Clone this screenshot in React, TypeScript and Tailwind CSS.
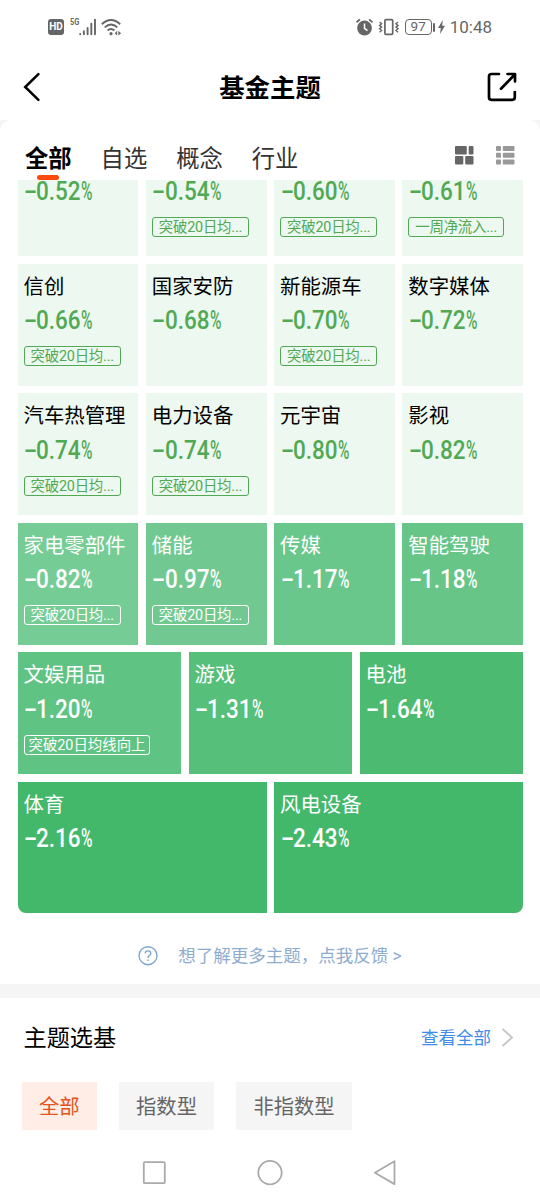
import { useState } from "react";

interface Theme {
  name: string;
  value: string;
  tag?: string;
  color?: string;
}

const TABS = ["全部", "自选", "概念", "行业"];
const TYPES = ["全部", "指数型", "非指数型"];
const TAG = "突破20日均...";

const ROWS: Theme[][] = [
  [
    { name: "", value: "0.52" },
    { name: "", value: "0.54", tag: TAG },
    { name: "", value: "0.60", tag: TAG },
    { name: "", value: "0.61", tag: "一周净流入..." },
  ],
  [
    { name: "信创", value: "0.66", tag: TAG },
    { name: "国家安防", value: "0.68" },
    { name: "新能源车", value: "0.70", tag: TAG },
    { name: "数字媒体", value: "0.72" },
  ],
  [
    { name: "汽车热管理", value: "0.74", tag: TAG },
    { name: "电力设备", value: "0.74", tag: TAG },
    { name: "元宇宙", value: "0.80" },
    { name: "影视", value: "0.82" },
  ],
  [
    { name: "家电零部件", value: "0.82", tag: TAG, color: "bg-[#76cc95]" },
    { name: "储能", value: "0.97", tag: TAG, color: "bg-[#71c991]" },
    { name: "传媒", value: "1.17", color: "bg-[#6ac78c]" },
    { name: "智能驾驶", value: "1.18", color: "bg-[#66c587]" },
  ],
  [
    { name: "文娱用品", value: "1.20", tag: "突破20日均线向上", color: "bg-[#5fc383]" },
    { name: "游戏", value: "1.31", color: "bg-[#56bf7a]" },
    { name: "电池", value: "1.64", color: "bg-[#4cbb71]" },
  ],
  [
    { name: "体育", value: "2.16", color: "bg-[#43b86b] rounded-bl-lg" },
    { name: "风电设备", value: "2.43", color: "bg-[#43b86b] rounded-br-lg" },
  ],
];

const StatusBar = () => (
  <div className="flex h-[54px] items-center bg-white pl-12 pr-12 text-[#666]">
    <div className="flex h-4 w-4 items-center justify-center rounded-[3px] bg-[#666] text-[10px] font-bold leading-none text-white">
      HD
    </div>
    <span className="-mt-2.5 ml-1.5 w-[9px] origin-left scale-x-[.78] text-[9.5px] font-bold leading-none">5G</span>
    <svg className="h-[18px] w-[18px]" viewBox="0 0 18 18" fill="none" stroke="currentColor" strokeWidth="1.9" strokeLinecap="round">
      <path d="M1.2 16v.2M4.9 13.3v3M8.6 10v6.3M12.3 5.7v10.6M16 1.6v14.7" />
    </svg>
    <svg className="ml-1 h-[19px] w-[21px]" viewBox="0 0 21 19" fill="none" stroke="currentColor" strokeWidth="1.9">
      <path d="M.8 6.2Q10 -2.2 19.2 6.2M3.7 9.4Q10 3.7 16.3 9.4M6.6 12.5Q10 9.3 13.4 12.5" />
      <circle cx="10" cy="15.7" r="1.6" fill="currentColor" stroke="none" />
      <path d="m16.2 12.8-2.4 2.5 2.4 2.3zM17.4 12.8l2.7 2.5-2.7 2.3z" fill="currentColor" stroke="none" />
    </svg>
    <div className="flex-1" />
    <svg className="h-[18px] w-[18px]" viewBox="0 0 18 18" fill="none" stroke="currentColor">
      <circle cx="8.5" cy="10" r="7.4" fill="currentColor" stroke="none" />
      <path d="M.5 4.3 3.9 1.3M16.5 4.3l-3.4-3" strokeWidth="1.8" />
      <path d="M8.5 5.5v4.8l3 2.4" stroke="white" strokeWidth="1.5" />
    </svg>
    <svg className="ml-1 h-[18px] w-[22px]" viewBox="0 0 22 18" fill="none" stroke="currentColor">
      <rect x="6.9" y="1.6" width="7.8" height="14.8" rx="1.2" strokeWidth="1.7" />
      <path d="m1.6 4 2 1.7-2 1.7 2 1.7-2 1.7 2 1.7-2 1.7M20 4l-2 1.7 2 1.7-2 1.7 2 1.7-2 1.7 2 1.7" strokeWidth="1.4" />
    </svg>
    <div className="ml-[5px] flex h-4 w-[27px] items-center justify-center rounded-[4px] border-[1.5px] border-[#666] text-[13.5px] leading-none">
      97
    </div>
    <div className="ml-px h-[9px] w-[2px] rounded bg-[#666]" />
    <svg className="ml-[3px] h-3.5 w-[7px]" viewBox="0 0 7 14" fill="currentColor">
      <path d="M4.8 0 0 8h2.8L2 14l5-8.3H4.2z" />
    </svg>
    <span className="ml-[5px] pt-px text-[17px] leading-none">10:48</span>
  </div>
);

const ThemeCard = ({ theme }: { theme: Theme }) => {
  const isLight = !theme.color;

  return (
    <div
      className={`flex min-w-0 flex-1 flex-col items-start px-1.5 pt-[9px] ${
        isLight ? "bg-[#ecf8f0] text-[#51a953]" : `${theme.color} text-white`
      }`}
    >
      <p className={`h-7 whitespace-nowrap text-[20.4px] leading-7 ${isLight ? "text-black" : ""}`}>{theme.name}</p>
      <p className="mt-[9.5px] flex h-5 pl-[.5px] text-[26px] font-medium leading-5">
        <span className="w-[12.3px] origin-left scale-x-[1.5]">-</span>
        <span className="w-[45px] origin-left scale-x-[.865]">{theme.value}</span>
        <span className="w-3 origin-left scale-x-[.6]">%</span>
      </p>
      {theme.tag && (
        <span
          className={`mt-4 h-5 whitespace-nowrap rounded-[3px] border text-[14.4px] leading-[19px] ${
            theme.tag.endsWith("...") ? "px-1.5 tracking-[-0.2px]" : "px-1"
          } ${isLight ? "border-[#51a953]" : "border-white"}`}
        >
          {theme.tag}
        </span>
      )}
    </div>
  );
};

export default function App() {
  const [tab, setTab] = useState(0);
  const [type, setType] = useState(0);

  return (
    <div className="flex h-[1200px] w-[540px] flex-col overflow-hidden bg-[#f5f5f5] font-[Roboto,'Noto_Sans_CJK_SC',sans-serif]">
      <StatusBar />

      <header className="flex h-[66px] items-center justify-between bg-white pl-[22px] pr-[22px]">
        <svg className="h-[30px] w-8" viewBox="0 0 32 30" fill="none" stroke="black" strokeWidth="2.5" strokeLinecap="round">
          <path d="M16.4 2.2 3.2 15l13.2 12.8" />
        </svg>
        <h1 className="pt-[3px] text-[25.4px] font-bold leading-none">基金主题</h1>
        <svg className="h-[30px] w-8" viewBox="0 0 32 30" fill="none" stroke="black" strokeWidth="2.7" strokeLinecap="round" strokeLinejoin="round">
          <path d="M13 2H5.5Q3 2 3 4.5v20.8Q3 27.8 5.5 27.8h20.8q2.5 0 2.5-2.5V20" />
          <path d="M15 16.8 28.8 2.5M21.5 2H29v7.5" />
        </svg>
      </header>

      <main className="rounded-t-xl bg-white">
        {/* keeps the tabs above the scrolled list */}
        <div className="relative z-10 flex h-[60px] items-start bg-white rounded-t-xl pl-[25px] pr-[25px] pt-[21px]">
          <div className="flex gap-[29px]">
            {TABS.map((label, i) => (
              <button
                key={label}
                onClick={() => setTab(i)}
                className={`flex flex-col items-center text-[23.3px] leading-9 ${
                  i === tab ? "font-bold text-black" : "text-[#333]"
                }`}
              >
                {label}
                {i === tab && <span className="-mt-0.5 h-[5px] w-[22px] rounded-full bg-[#fb4a0b]" />}
              </button>
            ))}
          </div>
          <div className="flex-1" />
          <svg className="mt-[4.5px] h-[19px] w-[19px]" viewBox="0 0 19 19" fill="#666">
            <rect x="0" y="0" width="11.8" height="8.4" rx="1" />
            <rect x="13.7" y="0" width="4.8" height="8.4" rx="1" />
            <rect x="0" y="10" width="8.3" height="8.4" rx="1" />
            <rect x="10.2" y="10" width="8.3" height="8.4" rx="1" />
          </svg>
          <svg className="ml-[22px] mt-[4.5px] h-[19px] w-[19px]" viewBox="0 0 19 19" fill="#999">
            <rect x="0" y="0" width="5" height="5" rx="1" />
            <rect x="6.8" y="0" width="11.7" height="5" rx="1" />
            <rect x="0" y="6.8" width="5" height="5" rx="1" />
            <rect x="6.8" y="6.8" width="11.7" height="5" rx="1" />
            <rect x="0" y="13.5" width="5" height="5" rx="1" />
            <rect x="6.8" y="13.5" width="11.7" height="5" rx="1" />
          </svg>
        </div>

        <div className="-mt-[46px] flex flex-col gap-[7.5px] pl-[17.5px] pr-[17px]">
          {ROWS.map((row, i) => (
            <div key={i} className={`flex gap-[7.5px] ${i === ROWS.length - 1 ? "h-[131.5px]" : "h-[122.1px]"}`}>
              {row.map((theme) => (
                <ThemeCard key={theme.name + theme.value} theme={theme} />
              ))}
            </div>
          ))}
        </div>

        <div className="flex h-[70.5px] items-center justify-center gap-5 pt-3.5 text-[#8eabd0]">
          <svg className="h-5 w-5" viewBox="0 0 20 20" fill="none" stroke="#7fa5d0" strokeWidth="1.4">
            <circle cx="10" cy="9.7" r="9" />
            <path d="M7.2 7.6Q7.2 4.9 10 4.9t2.8 2.5Q12.8 8.7 11.2 9.7 10 10.5 10 12" />
            <path d="M10 13.6v1.5" />
          </svg>
          <span className="text-[17.5px] leading-6">想了解更多主题，点我反馈 &gt;</span>
        </div>
      </main>

      <section className="mt-3.5 flex-1 bg-white">
        <div className="flex h-20 items-center pl-[23.5px] pr-[26px]">
          <h2 className="flex-1 pt-px text-[23.2px] leading-8 text-black">主题选基</h2>
          <span className="text-[17.5px] leading-6 text-[#3f8de8]">查看全部</span>
          <svg className="ml-2.5 h-5 w-[13px]" viewBox="0 0 13 20" fill="none" stroke="#c4c4c4" strokeWidth="1.8">
            <path d="m1.5.8 9.5 8.7-9.5 8.7" />
          </svg>
        </div>
        <div className="flex gap-[21.5px] pl-[21.5px] pt-[4.5px]">
          {TYPES.map((label, i) => (
            <button
              key={label}
              onClick={() => setType(i)}
              className={`h-12 px-[17.5px] pt-0.5 text-[20.3px] leading-[46px] ${
                i === type ? "bg-[#ffede6] text-[#e0551f]" : "bg-[#f5f5f5] text-[#666]"
              }`}
            >
              {label}
            </button>
          ))}
        </div>
        <nav className="mt-[29.5px] flex items-center justify-center gap-[90px]">
          <svg className="h-[26px] w-[26px]" viewBox="0 0 26 26" fill="none" stroke="#aaa" strokeWidth="1.8">
            <rect x="2.8" y="2.2" width="21" height="21" rx="1" />
          </svg>
          <svg className="h-[26px] w-[26px]" viewBox="0 0 26 26" fill="none" stroke="#aaa" strokeWidth="1.8">
            <circle cx="13" cy="12.6" r="11.7" />
          </svg>
          <svg className="h-[26px] w-[26px]" viewBox="0 0 26 26" fill="none" stroke="#aaa" strokeWidth="1.8" strokeLinejoin="round">
            <path d="M21.5 1.3v22.8L1.9 12.7z" />
          </svg>
        </nav>
      </section>
    </div>
  );
}
